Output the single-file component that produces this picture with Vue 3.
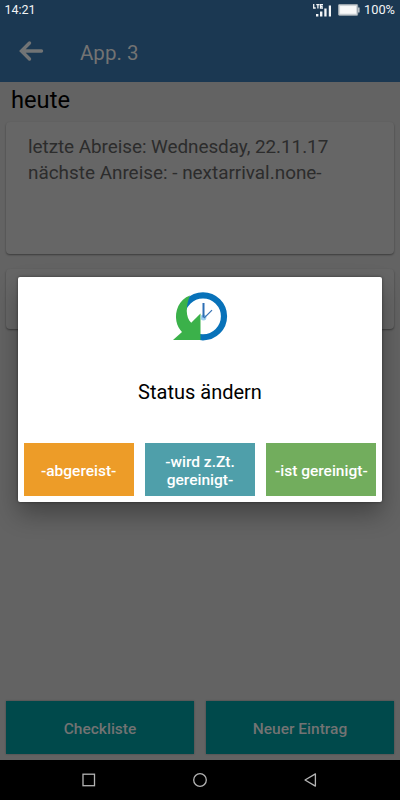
<script setup>
const details = ['letzte Abreise: Wednesday, 22.11.17', 'nächste Anreise: - nextarrival.none-']
const actions = ['Checkliste', 'Neuer Eintrag']
</script>

<template>
  <div class="screen">
    <header class="top">
      <div class="status">
        <span class="time">14:21</span>
        <svg class="signal" width="20" height="14" viewBox="0 0 20 14">
          <path d="M.7 0v4h2M3.300.6h3.200M4.900 .6v3.800M10 .6H7.500V4H10M7.500 2.300h2.200" fill="none" stroke="#f4f6f7" stroke-width="1.300" />
          <path d="M3 10h2.400v2.500H3zM7 7.500h2.400v5H7zM11.300 4.500h2.300v8h-2.300zM15.800 1.500H18v11h-2.200z" fill="#f4f6f7" />
        </svg>
        <svg class="battery" width="22" height="12" viewBox="0 0 22 12">
          <rect x=".6" y=".6" width="19" height="10.6" rx="1" fill="#f8f8f8" stroke="#9aa4ac" stroke-width="1.2" />
          <rect x="1.7" y="1.7" width="16.8" height="8.4" fill="none" stroke="#c4cbd0" stroke-width=".7" />
          <path d="M20 3.5h1.6v5H20z" fill="#bac2c8" />
        </svg>
        <span class="percent">100%</span>
      </div>
      <div class="toolbar">
        <svg class="back" width="26" height="22" viewBox="0 0 26 22">
          <path d="M11.500 3 3.500 11l8 8M4 11h19.500" fill="none" stroke="#727475" stroke-width="3.400" stroke-linecap="round" />
        </svg>
        <h1>App. 3</h1>
      </div>
    </header>
    <main>
      <h2>heute</h2>
      <section class="card info">
        <p v-for="line in details" :key="line">{{ line }}</p>
      </section>
      <section class="card small"></section>
    </main>
    <footer class="actions">
      <button v-for="label in actions" :key="label">{{ label }}</button>
    </footer>
    <nav>
      <svg width="400" height="40" viewBox="0 0 400 40" fill="none" stroke="#b4b4b4" stroke-width="1.300">
        <rect x="83" y="14.200" width="11.500" height="11.500" />
        <circle cx="200" cy="20" r="6.300" />
        <path d="M315.400 13.900v12.200L305 20z" stroke-linejoin="round" />
      </svg>
    </nav>

    <div class="dialog">
      <svg class="logo" width="56" height="50" viewBox="0 0 56 50">
        <circle cx="31" cy="25.300" r="21" fill="none" stroke="#0872b9" stroke-width="6.200" />
        <path d="M18 4.500C7 8.500 2.500 20 4.400 30.200 5.100 34.600 7.800 38.700 10 41L1 49h27.500V22.500l-9.300 9.300C13.500 26 13.500 15.500 18 4.500Z" fill="#3bb14a" />
        <circle cx="31.500" cy="26.500" r="2.900" fill="#9ed0ee" />
        <path d="M31.500 12v14.500" stroke="#2d6eb4" stroke-width="2" />
        <path d="m32 27.200 8-8" stroke="#3672b4" stroke-width="1.200" />
      </svg>
      <p class="title">Status ändern</p>
      <div class="choices">
        <button class="left">-abgereist-</button>
        <button class="busy">-wird z.Zt.<br>gereinigt-</button>
        <button class="clean">-ist gereinigt-</button>
      </div>
    </div>
  </div>
</template>

<style>
body { margin: 0; }
</style>

<style scoped>
.screen {
  position: relative;
  display: flex;
  flex-direction: column;
  width: 400px;
  height: 800px;
  overflow: hidden;
  background: #636363;
  font-family: Roboto, sans-serif;
}
h1, h2, p { margin: 0; font-weight: 400; }
.top { height: 82px; background: #1b3852; }
.status {
  display: flex;
  align-items: center;
  height: 20px;
  padding: 0 5px 0 4.500px;
  color: #f2f4f5;
  font-size: 12.500px;
  line-height: 20px;
}
.time { margin-right: auto; }
.signal { margin: 1px 5px 0 0; }
.battery { margin-right: 4px; }
.percent { font-size: 12.800px; }
.toolbar { display: flex; align-items: center; height: 62px; padding-left: 18px; }
.back { margin-right: 36px; }
.toolbar h1 { color: #737373; font-size: 20.500px; line-height: 24px; margin-top: 3px; }
main { flex: 1; padding: 0 6px; }
h2 { height: 40px; padding-left: 5px; font-size: 23.700px; line-height: 36px; color: #000; }
.card {
  border-radius: 4px;
  background: #666;
  box-shadow: 0 1px 2px rgba(0, 0, 0, .4);
  box-sizing: border-box;
}
.info { height: 132px; padding: 12px 22px; color: #2c2c2c; font-size: 18.900px; line-height: 26px; }
.info p:first-child { letter-spacing: -.05px; }
.small { height: 60px; margin-top: 15px; }
.actions { display: flex; gap: 12px; height: 59px; padding: 0 6px; }
button { border: 0; padding: 0; font-family: inherit; font-weight: 500; }
.actions button {
  flex: 1;
  height: 53px;
  padding-top: 2px;
  background: #00494b;
  color: #737373;
  font-size: 15.500px;
  box-shadow: 0 0 2px rgba(0, 0, 0, .3);
}
nav { height: 40px; background: #000; }
nav svg { display: block; }
.dialog {
  position: absolute;
  left: 18px;
  top: 277px;
  display: flex;
  flex-direction: column;
  align-items: center;
  width: 364px;
  height: 225px;
  padding: 14px 5.500px 6px;
  box-sizing: border-box;
  border-radius: 2px;
  background: #fff;
  box-shadow: 0 12px 24px rgba(0, 0, 0, .32), 0 0 3px rgba(0, 0, 0, .45);
}
.title { margin-top: 38px; font-size: 20px; line-height: 26px; color: #000; }
.choices { display: flex; gap: 11px; align-self: stretch; margin-top: auto; }
.choices button { flex: 1; height: 53px; padding-top: 3px; color: #fff; font-size: 15.500px; line-height: 18.500px; white-space: nowrap; }
.left { background: #ed9c28; }
.busy { background: #4f9faa; }
.clean { background: #72ad5d; }
</style>
